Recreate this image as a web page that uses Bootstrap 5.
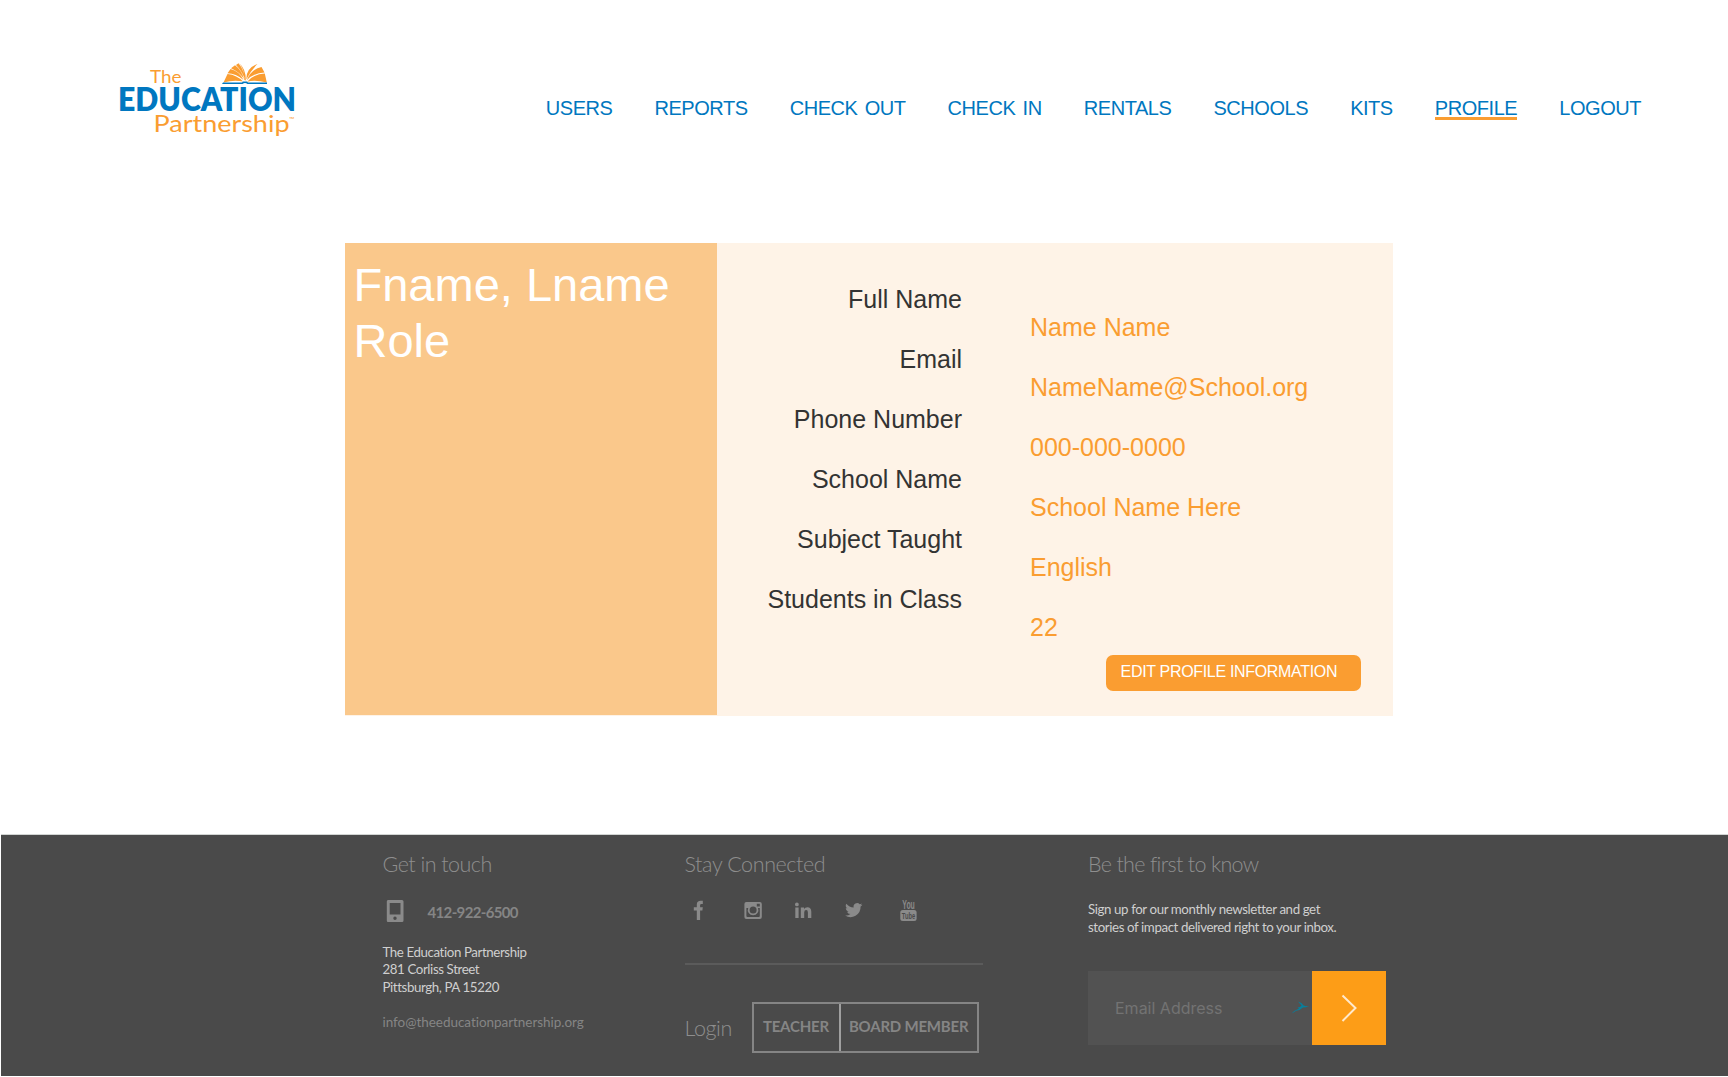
<!DOCTYPE html>
<html lang="en">
<head>
<meta charset="utf-8">
<title>The Education Partnership - Profile</title>
<link href="https://cdn.jsdelivr.net/npm/bootstrap@5.3.0/dist/css/bootstrap.min.css" rel="stylesheet">
<style>
body{font-family:"Liberation Sans",Arial,sans-serif;background:#fff;width:1728px;height:1077px;overflow:hidden}
.site-head{height:243px;padding:60px 87px 0 114px}
.brand-mark{width:190px;height:80px;overflow:visible}
.site-nav{gap:42.1px;padding-top:39px}
.site-nav a{color:#0077c0;font-size:20px;line-height:18px;letter-spacing:-.46px;word-spacing:2.2px;text-decoration:none;white-space:nowrap;height:21px}
.site-nav a.active{border-bottom:3px solid #fa9d31}
.profile-box{margin-left:345px;width:1048px;height:473px;background:#fef3e7}
.who{width:372px;height:472px;background:#fac88b;color:#fff;font-size:47px;line-height:56px;padding:14px 8px 0 8.5px}
.labels,.vals{font-size:25px;line-height:60px;white-space:nowrap}
.labels{width:245px;padding-top:26px;color:#333}
.vals{margin-left:68px;padding-top:54px;color:#fa9d31}
.edit-btn{margin:-1.6px 0 0 76.2px;width:255px;height:36px;border:0;border-radius:7px;background:#fa9d31;color:#fff;font-size:16px;line-height:32px;letter-spacing:-.32px;padding:0 0 2px 14.4px;text-align:left}
.edit-btn:hover{background:#fa9d31;color:#fff}
.site-foot{margin:118px 0 0 1px;height:242px;background:#4a4a4a;border-top:1px solid #d2d5d3;padding:15px 0 0 381.5px;font-family:Lato,sans-serif;color:#858585;white-space:nowrap}
.foot-a{width:302px}.foot-b{width:403.5px}.foot-c{width:298px}
.foot-t{font-size:21.5px;line-height:28px;font-weight:300;letter-spacing:-.4px;margin:0;color:#8e8e8e}
.foot-a .foot-t{letter-spacing:-.53px}
.foot-c .foot-t{letter-spacing:-.68px}
.tel-row{margin-top:22px;height:22px}
.tel{font-size:15px;font-weight:700;line-height:24px;margin-left:23px;letter-spacing:-.65px}
.phone-icon{margin-left:-1px;margin-right:1px}
.addr{font-size:13.3px;line-height:17.7px;margin-top:21.7px;color:#cfcfcf;letter-spacing:-.4px}
.mail{font-size:13.5px;line-height:18px;margin-top:15.8px;font-variant-ligatures:none;letter-spacing:-.04px}
.social{margin-top:22px}
.rule{height:2px;width:298px;background:#5b5b5b;margin-top:41px}
.login-row{margin-top:37px;height:51px}
.login-btns{margin-left:20px;width:227px;height:51px;border:2px solid #858585;font-size:15px;font-weight:700;line-height:45px;letter-spacing:-.2px}
.login-btns div:first-child{width:87px;padding-left:9px;border-right:2px solid #a0a0a0}
.login-btns div:last-child{padding-left:8px}
.news{font-size:13.3px;line-height:17.7px;margin-top:23.4px;color:#cfcfcf;letter-spacing:-.4px}
.sub-row{margin-top:33.8px;height:74.5px}
.mailbox{width:224px;background:#525252;padding-left:27px;padding-right:2px;font-family:Inter,sans-serif;font-size:16px;color:#737373}
.go{width:73.5px;background:#fd9d17}
</style>
<script src="https://cdn.jsdelivr.net/npm/bootstrap@5.3.0/dist/js/bootstrap.bundle.min.js"></script>
</head>
<body>
<header class="site-head d-flex justify-content-between align-items-start">
<svg class="brand-mark" viewBox="114 60 190 80" font-family="Lato,sans-serif">
<text x="150" y="83" font-size="18" fill="#fa9d31" textLength="31.5" lengthAdjust="spacingAndGlyphs">The</text>
<text x="118" y="111.300" font-size="32" font-weight="800" fill="#0077c0" textLength="178" lengthAdjust="spacingAndGlyphs">EDUCATION</text>
<text x="153.500" y="132" font-size="23.500" fill="#fa9d31" textLength="136" lengthAdjust="spacingAndGlyphs">Partnership</text>
<text x="289" y="122" font-size="7" fill="#fa9d31">™</text>
<path fill="#fa9d31" d="M223.500 82.500 227.500 74Q237 75 243 81.500Q234 79.500 223.500 82.500ZM227.500 73.300 230.500 69Q239 71 243.500 80Q236 73.500 227.500 73.300ZM231 68.200 235 65.300Q241.500 70 244 79Q239 71.500 231 68.200ZM236 65 238.500 63.300Q244 70 244.500 78Q241 70 236 65ZM239 63.100Q246 69 245.800 80.500L244.300 80Q244.500 69 239 63.100ZM246.300 79.500Q246 68 257.500 64Q250.500 71 246.300 79.500ZM246.700 80.500Q251 69 261.500 67L264.500 72.500Q253 73 246.700 80.500ZM247.200 81.700Q254 74 264.800 73.500L266.800 82.500Q255 79.500 247.200 81.700Z"/>
<path fill="#0077c0" d="M223 82.500H242L243 81.500H247L248 82.500H267V84H247.500Q245 82 242.500 84H222Z"/>
</svg>
<nav class="site-nav d-flex">
<a href="#">USERS</a><a href="#">REPORTS</a><a href="#">CHECK OUT</a><a href="#">CHECK IN</a><a href="#">RENTALS</a><a href="#">SCHOOLS</a><a href="#">KITS</a><a href="#" class="active">PROFILE</a><a href="#">LOGOUT</a>
</nav>
</header>
<main class="profile-box d-flex align-items-start">
<div class="who">Fname, Lname<br>Role</div>
<div class="labels text-end"><div>Full Name</div><div>Email</div><div>Phone Number</div><div>School Name</div><div>Subject Taught</div><div>Students in Class</div></div>
<div class="vals"><div>Name Name</div><div>NameName@School.org</div><div>000-000-0000</div><div>School Name Here</div><div>English</div><div>22</div>
<button class="btn edit-btn d-block">EDIT PROFILE INFORMATION</button></div>
</main>
<footer class="site-foot d-flex">
<section class="foot-a">
<h2 class="foot-t">Get in touch</h2>
<div class="tel-row d-flex"><svg class="phone-icon" width="22" height="22" viewBox="0 0 22 22"><path fill="#8a8a8a" fill-rule="evenodd" d="M6 0H20Q21.500 0 21.500 1.500V20.500Q21.500 22 20 22H6Q4.800 22 4.800 20.500V1.500Q4.800 0 6 0ZM7.700 3V14.500H18.500V3ZM13 16.500A1.700 1.700 0 1 0 13 19.900A1.700 1.700 0 1 0 13 16.500Z"/></svg><div class="tel">412-922-6500</div></div>
<div class="addr">The Education Partnership<br>281 Corliss Street<br>Pittsburgh, PA 15220</div>
<div class="mail">info@theeducationpartnership.org</div>
</section>
<section class="foot-b">
<h2 class="foot-t">Stay Connected</h2>
<svg class="social d-block" width="240" height="22" viewBox="685.200 900 240 22" fill="#8a8a8a">
<path d="M697 920V910.500H694V907.200H697V904.500Q697 900.800 701 900.800H703V904H701.700Q700.300 904 700.300 905.300V907.200H703L702.600 910.500H700.300V920Z"/>
<path fill-rule="evenodd" d="M746.500 902H760Q762 902 762 904V917Q762 919 760 919H746.500Q744.600 919 744.600 917V904Q744.600 902 746.500 902ZM746.600 908V916Q746.600 917 747.600 917H759Q760 917 760 916V908H758.200A5.300 5.300 0 1 1 748.400 908ZM757 903.700V906.500H760V903.700ZM753.300 906.500A3.500 3.500 0 1 0 753.300 913.500A3.500 3.500 0 1 0 753.300 906.500Z"/>
<path d="M795.500 907.500H798.800V918H795.500ZM797.100 902.500A1.900 1.900 0 1 1 797.100 906.300A1.900 1.900 0 1 1 797.100 902.500ZM801 907.500H804.200V909Q805.200 907.200 807.600 907.200Q811.500 907.200 811.500 911.700V918H808.100V912.400Q808.100 910 806.400 910Q804.400 910 804.400 912.400V918H801Z"/>
<path transform="translate(845.300 901.500) scale(.72)" d="M24 4.600a10 10 0 0 1-2.800.8 5 5 0 0 0 2.200-2.700 10 10 0 0 1-3.100 1.200 4.900 4.900 0 0 0-8.400 4.500A14 14 0 0 1 1.700 3.200 4.900 4.900 0 0 0 3.200 9.700 5 5 0 0 1 1 9.100a5 5 0 0 0 3.900 4.900 5 5 0 0 1-2.200.1 4.900 4.900 0 0 0 4.600 3.400A10 10 0 0 1 0 19.500a14 14 0 0 0 21.500-12.400A10 10 0 0 0 24 4.600z"/>
<text x="902.500" y="909" font-size="12" font-weight="700" font-family="Liberation Sans,sans-serif" textLength="12.500" lengthAdjust="spacingAndGlyphs">You</text>
<rect x="900.500" y="910" width="16.300" height="11" rx="2.500"/>
<text x="902" y="919" font-size="9.500" font-weight="700" font-family="Liberation Sans,sans-serif" fill="#4a4a4a" textLength="13.300" lengthAdjust="spacingAndGlyphs">Tube</text>
</svg>
<div class="rule"></div>
<div class="login-row d-flex align-items-center"><h2 class="foot-t">Login</h2>
<div class="login-btns d-flex"><div>TEACHER</div><div>BOARD MEMBER</div></div></div>
</section>
<section class="foot-c">
<h2 class="foot-t">Be the first to know</h2>
<div class="news">Sign up for our monthly newsletter and get<br>stories of impact delivered right to your inbox.</div>
<div class="sub-row d-flex"><div class="mailbox d-flex align-items-center justify-content-between"><span>Email Address</span><svg width="19" height="13" viewBox="0 0 19 13"><path fill="#087f9c" d="M.5 12.500Q4 9 8 7.500L6.500 6.500Q9.500 6.500 10.500 4.500L7 .5Q11 1.500 12.300 4.200Q15 5.500 18.500 5Q15 6.500 12 6.500Q9 9.500 5 9.800Q3 11.500.5 12.500Z"/></svg></div><div class="go d-flex align-items-center justify-content-center"><svg width="16" height="28" viewBox="0 0 16 28"><path d="M1.500 1.500 14.500 14 1.500 27" fill="none" stroke="#ffe9cc" stroke-width="2"/></svg></div></div>
</section>
</footer>
</body>
</html>
